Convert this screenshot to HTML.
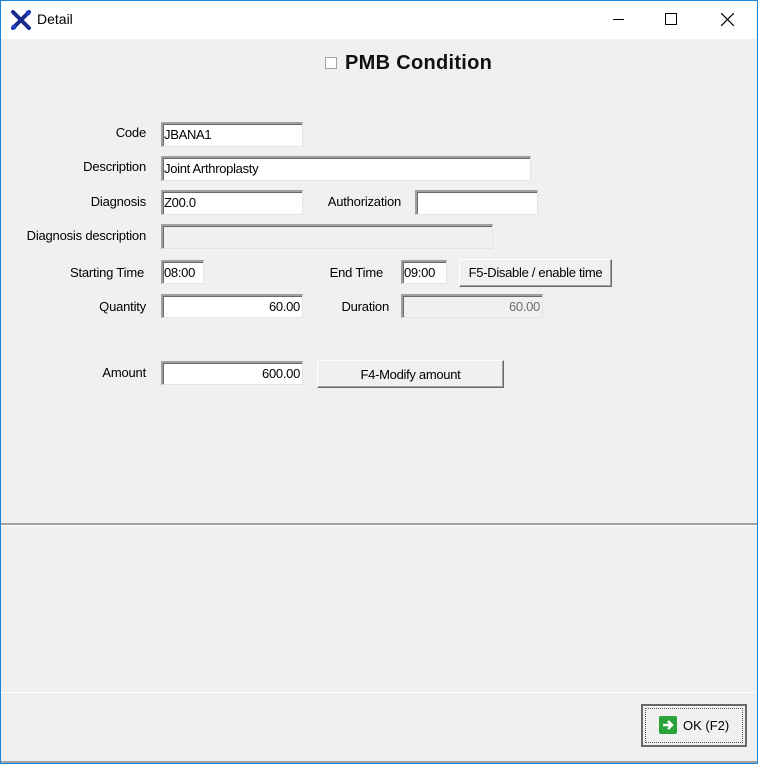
<!DOCTYPE html>
<html><head><style>
*{margin:0;padding:0;box-sizing:border-box}
body{width:758px;height:764px;background:#f0f0f0;font-family:"Liberation Sans",sans-serif;font-size:13px;color:#000;position:relative;overflow:hidden}
.win{position:absolute;left:0;top:0;width:758px;height:764px;border:1px solid #1883d7;}
.title{position:absolute;left:1px;top:1px;width:756px;height:38px;background:#fff}
.a{position:absolute;white-space:nowrap}
.lbl{position:absolute;text-align:right;white-space:nowrap;line-height:14px;letter-spacing:-0.2px}
.tb{position:absolute;background:#fff;border-top:2px solid #a0a0a0;border-left:2px solid #a0a0a0;border-right:1px solid #e3e3e3;border-bottom:1px solid #e3e3e3;padding:4px 2px 0 1px;line-height:14px;letter-spacing:-0.3px;box-shadow:inset 1px 1px 0 #696969}
.dis{background:#f0f0f0}
.r{text-align:right}
.btn{position:absolute;background:#f0f0f0;border:1px solid;border-color:#fff #696969 #696969 #fff;box-shadow:inset -1px -1px 0 #a0a0a0;text-align:center;line-height:24px;letter-spacing:-0.3px}
</style></head><body>
<div class="win"></div>
<div class="title"></div>
<svg class="a" style="left:10px;top:10px" width="22" height="20" viewBox="0 0 22 20"><path d="M3 2 L19 18 M19 2 L3 18" stroke="#1a2a8a" stroke-width="4" stroke-linecap="round"/><circle cx="4" cy="17" r="2.5" fill="#2040c0"/><circle cx="18" cy="3" r="2.5" fill="#2040c0"/></svg>
<div class="a" style="left:37px;top:11px;font-size:14px">Detail</div>
<div class="a" style="left:613px;top:19px;width:11px;height:1px;background:#000"></div>
<div class="a" style="left:665px;top:13px;width:12px;height:12px;border:1px solid #000"></div>
<svg class="a" style="left:721px;top:13px" width="13" height="13"><path d="M0 0L13 13M13 0L0 13" stroke="#000" stroke-width="1.2"/></svg>

<div class="a" style="left:325px;top:57px;width:12px;height:12px;border:1px solid #a0a0a0;background:#fff"></div>
<div class="a" style="left:345px;top:52px;font-size:20px;font-weight:bold;color:#111;letter-spacing:0.3px">PMB Condition</div>

<div class="lbl" style="right:612px;top:126px">Code</div>
<div class="tb" style="left:161px;top:122px;width:142px;height:25px">JBANA1</div>
<div class="lbl" style="right:612px;top:160px">Description</div>
<div class="tb" style="left:161px;top:156px;width:370px;height:25px">Joint Arthroplasty</div>
<div class="lbl" style="right:612px;top:195px">Diagnosis</div>
<div class="tb" style="left:161px;top:190px;width:142px;height:25px">Z00.0</div>
<div class="lbl" style="right:357px;top:195px">Authorization</div>
<div class="tb" style="left:415px;top:190px;width:123px;height:25px"></div>
<div class="lbl" style="right:612px;top:229px">Diagnosis description</div>
<div class="tb dis" style="left:161px;top:224px;width:332px;height:25px"></div>
<div class="lbl" style="right:614px;top:266px">Starting Time</div>
<div class="tb" style="left:161px;top:260px;width:43px;height:24px">08:00</div>
<div class="lbl" style="right:375px;top:266px">End Time</div>
<div class="tb" style="left:401px;top:260px;width:46px;height:24px">09:00</div>
<div class="btn" style="left:459px;top:259px;width:153px;height:28px;line-height:26px">F5-Disable / enable time</div>
<div class="lbl" style="right:612px;top:300px">Quantity</div>
<div class="tb r" style="left:161px;top:294px;width:142px;height:24px">60.00</div>
<div class="lbl" style="right:369px;top:300px">Duration</div>
<div class="tb r dis" style="left:401px;top:294px;width:142px;height:24px;color:#6d6d6d">60.00</div>
<div class="lbl" style="right:612px;top:366px">Amount</div>
<div class="tb r" style="left:161px;top:361px;width:142px;height:24px">600.00</div>
<div class="btn" style="left:317px;top:360px;width:187px;height:28px;line-height:28px">F4-Modify amount</div>

<div class="a" style="left:1px;top:523px;width:756px;height:2px;background:#a0a0a0"></div>
<div class="a" style="left:1px;top:525px;width:756px;height:1px;background:#fff"></div>
<div class="a" style="left:1px;top:692px;width:756px;height:1px;background:#fff"></div>
<div class="a" style="left:1px;top:761px;width:756px;height:2px;background:#a0a0a0"></div>

<div class="a" style="left:641px;top:704px;width:106px;height:43px;border:2px solid #696969;background:#f0f0f0"></div>
<div class="a" style="left:645px;top:708px;width:98px;height:35px;border:1px dotted #555"></div>
<div class="a" style="left:659px;top:716px;width:18px;height:18px;background:#2aa33a;border-radius:2px"></div>
<svg class="a" style="left:659px;top:716px" width="18" height="18"><path d="M4 9H13M9 5L13 9L9 13" stroke="#fff" stroke-width="2.4" fill="none"/></svg>
<div class="a" style="left:683px;top:718px;font-size:13px">OK (F2)</div>
</body></html>
